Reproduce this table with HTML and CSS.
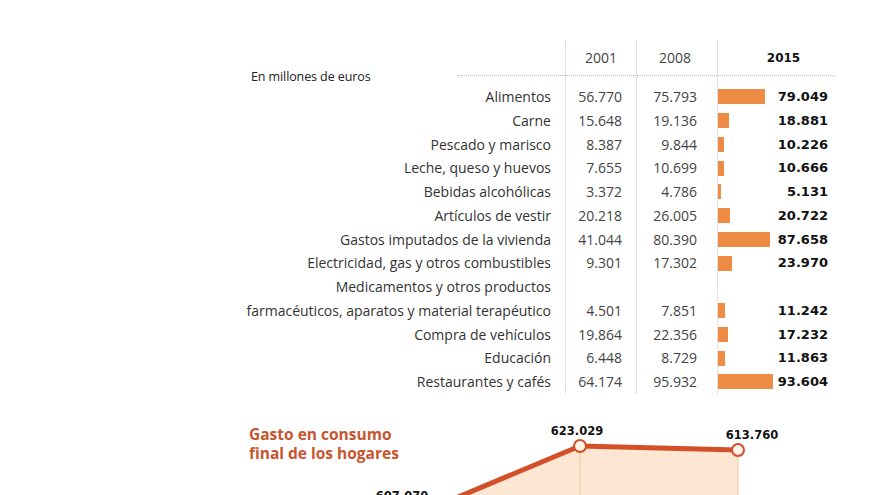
FILE: index.html
```html
<!DOCTYPE html>
<html lang="es">
<head>
<meta charset="utf-8">
<title>Gasto de los hogares</title>
<link rel="stylesheet" href="styles.css">
</head>
<body>
<main class="page">
  <section class="table">
    <div class="col col-label">
      <div class="head head-label"><span class="unit">En millones de euros</span><span class="dots"></span></div>
      <div class="cell first">Alimentos</div>
      <div class="cell">Carne</div>
      <div class="cell">Pescado y marisco</div>
      <div class="cell">Leche, queso y huevos</div>
      <div class="cell">Bebidas alcohólicas</div>
      <div class="cell">Artículos de vestir</div>
      <div class="cell">Gastos imputados de la vivienda</div>
      <div class="cell">Electricidad, gas y otros combustibles</div>
      <div class="cell">Medicamentos y otros productos</div>
      <div class="cell">farmacéuticos, aparatos y material terapéutico</div>
      <div class="cell">Compra de vehículos</div>
      <div class="cell">Educación</div>
      <div class="cell">Restaurantes y cafés</div>
    </div>
    <div class="col col-a">
      <div class="head">2001</div>
      <div class="cell first">56.770</div>
      <div class="cell">15.648</div>
      <div class="cell">8.387</div>
      <div class="cell">7.655</div>
      <div class="cell">3.372</div>
      <div class="cell">20.218</div>
      <div class="cell">41.044</div>
      <div class="cell">9.301</div>
      <div class="cell"></div>
      <div class="cell">4.501</div>
      <div class="cell">19.864</div>
      <div class="cell">6.448</div>
      <div class="cell">64.174</div>
    </div>
    <div class="col col-b">
      <div class="head">2008</div>
      <div class="cell first">75.793</div>
      <div class="cell">19.136</div>
      <div class="cell">9.844</div>
      <div class="cell">10.699</div>
      <div class="cell">4.786</div>
      <div class="cell">26.005</div>
      <div class="cell">80.390</div>
      <div class="cell">17.302</div>
      <div class="cell"></div>
      <div class="cell">7.851</div>
      <div class="cell">22.356</div>
      <div class="cell">8.729</div>
      <div class="cell">95.932</div>
    </div>
    <div class="col col-c">
      <div class="head head-bold">2015</div>
      <div class="cell first"><span class="bar" style="width:47px"></span><b>79.049</b></div>
      <div class="cell"><span class="bar" style="width:11px"></span><b>18.881</b></div>
      <div class="cell"><span class="bar" style="width:6px"></span><b>10.226</b></div>
      <div class="cell"><span class="bar" style="width:6px"></span><b>10.666</b></div>
      <div class="cell"><span class="bar" style="width:3px"></span><b>5.131</b></div>
      <div class="cell"><span class="bar" style="width:12px"></span><b>20.722</b></div>
      <div class="cell"><span class="bar" style="width:52px"></span><b>87.658</b></div>
      <div class="cell"><span class="bar" style="width:14px"></span><b>23.970</b></div>
      <div class="cell"></div>
      <div class="cell"><span class="bar" style="width:7px"></span><b>11.242</b></div>
      <div class="cell"><span class="bar" style="width:10px"></span><b>17.232</b></div>
      <div class="cell"><span class="bar" style="width:7px"></span><b>11.863</b></div>
      <div class="cell"><span class="bar" style="width:55px"></span><b>93.604</b></div>
    </div>
  </section>
  <section class="trend">
    <svg class="trend-svg" width="653" height="130" viewBox="0 0 653 130">
      <text class="title" x="22" y="46">Gasto en consumo</text>
      <text class="title" x="22" y="65">final de los hogares</text>
      <polygon class="area" points="193,119 353,52 511,56 511,130 193,130"/>
      <line class="drop" x1="353" y1="58" x2="353" y2="130"/>
      <line class="drop" x1="511" y1="62" x2="511" y2="130"/>
      <polyline class="trendline" points="193,119 353,52 511,56"/>
      <circle class="dot" cx="353" cy="52" r="6"/>
      <circle class="dot" cx="511" cy="56" r="6"/>
      <text class="val" x="350" y="41">623.029</text>
      <text class="val" x="525" y="45">613.760</text>
      <text class="val" x="175" y="106">607.070</text>
    </svg>
  </section>
</main>
</body>
</html>
```
FILE: styles.css
```css
html, body {
  margin: 0;
  padding: 0;
  background: #ffffff;
}
body {
  width: 880px;
  height: 495px;
  overflow: hidden;
  font-family: "Open Sans", "Noto Sans", sans-serif;
  color: #333333;
}
.page {
  padding-top: 40px;
  padding-left: 227px;
}
.table {
  display: flex;
}
.col {
  display: flex;
  flex-direction: column;
}
.col-label { width: 338px; }
.col-a { width: 71px; border-left: 1px solid #ecdede; box-sizing: border-box; }
.col-b { width: 81px; border-left: 1px solid #e4e0e0; box-sizing: border-box; }
.col-c { width: 118px; border-left: 1px solid #e4e0e0; box-sizing: border-box; }

.head {
  height: 36px;
  box-sizing: border-box;
  border-bottom: 1px dotted #bdbdbd;
  font-size: 14px;
  line-height: 36px;
  text-align: center;
  color: #444;
}
.col-b .head { padding-right: 4px; }
.col-c .head { padding-left: 14px; }
.head-bold {
  font-family: "DejaVu Sans", sans-serif;
  font-weight: bold;
  font-size: 12px;
  color: #111;
}
.head-label {
  display: flex;
  align-items: flex-end;
  border-bottom: none;
  padding-left: 24px;
  text-align: left;
}
.unit {
  font-size: 12.5px;
  line-height: 14px;
  margin-bottom: -8px;
  color: #222;
  letter-spacing: -0.1px;
}
.dots {
  margin-left: auto;
  width: 108px;
  height: 36px;
  box-sizing: border-box;
  border-bottom: 1px dotted #bdbdbd;
}

.cell {
  height: 23.75px;
  line-height: 23.75px;
  white-space: nowrap;
  font-size: 14px;
}
.cell.first { margin-top: 9px; }
.col-label .cell {
  text-align: right;
  padding-right: 14px;
  color: #333;
}
.col-a .cell, .col-b .cell {
  text-align: right;
  color: #444;
}
.col-a .cell { padding-right: 14px; }
.col-b .cell { padding-right: 20px; }
.col-c .cell {
  display: flex;
  align-items: center;
  padding-right: 7px;
}
.bar {
  display: block;
  height: 15px;
  background: #ee8b45;
}
.col-c b {
  margin-left: auto;
  font-family: "DejaVu Sans", sans-serif;
  font-weight: bold;
  font-size: 13px;
  color: #111;
}

.trend-svg {
  display: block;
}
.title {
  font-family: "Open Sans", "Noto Sans", sans-serif;
  font-size: 15.5px;
  font-weight: 700;
  fill: #c7552f;
}
.area { fill: #fde7d3; }
.drop { stroke: #f2c49c; stroke-width: 1; }
.trendline {
  fill: none;
  stroke: #d24f28;
  stroke-width: 5;
  stroke-linejoin: round;
}
.dot {
  fill: #fff3e8;
  stroke: #d24f28;
  stroke-width: 2;
}
.val {
  font-family: "DejaVu Sans", sans-serif;
  font-weight: bold;
  font-size: 11.5px;
  fill: #111;
  text-anchor: middle;
}
```
